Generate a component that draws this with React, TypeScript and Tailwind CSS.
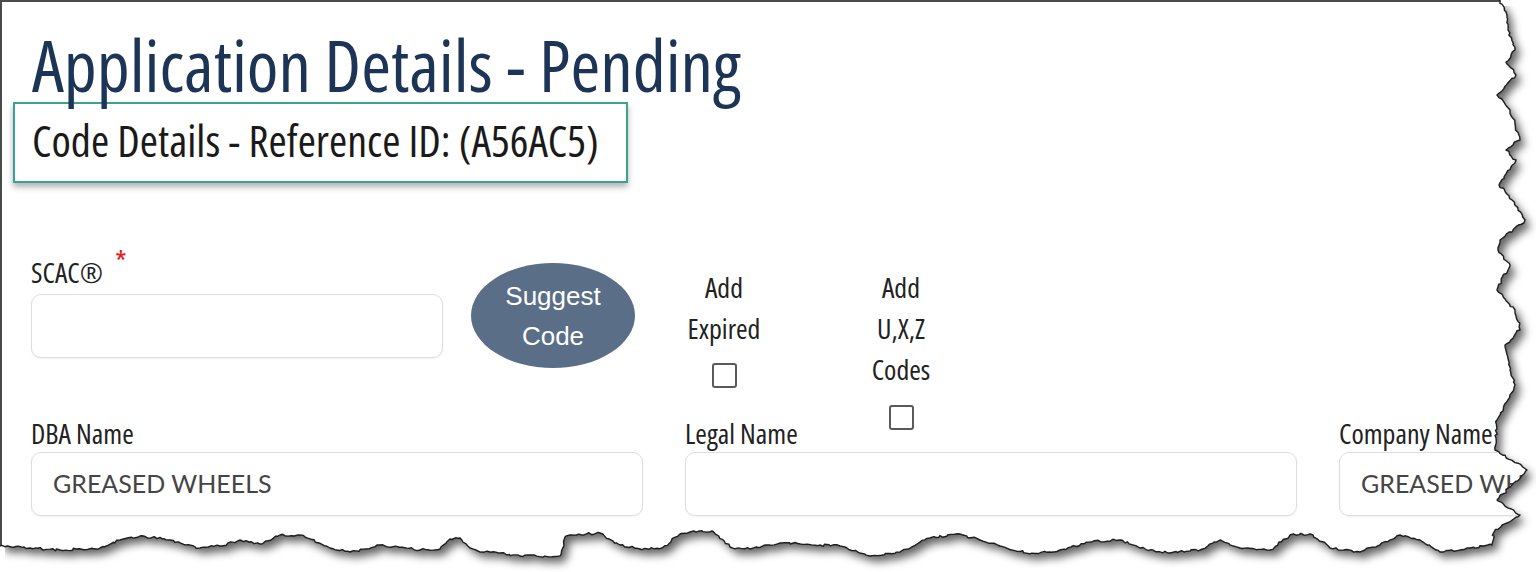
import React from "react";

const narrow = "font-['Open_Sans',sans-serif] font-stretch-condensed";

// rough outline of the torn paper edge, right side then bottom (right to left)
const rightEdge: [number, number][] = [
  [1500, 0], [1506, 12], [1508, 30], [1515, 50], [1506, 62], [1516, 75], [1497, 95],
  [1510, 110], [1520, 140], [1506, 150], [1516, 160], [1499, 185], [1512, 200],
  [1525, 220], [1500, 240], [1498, 250], [1510, 265], [1497, 290], [1515, 310],
  [1520, 330], [1505, 345], [1510, 370], [1515, 385], [1497, 420], [1495, 450],
  [1527, 470], [1497, 500], [1520, 515], [1494, 532], [1492, 545],
];

const bottomEdge: [number, number][] = [
  [1470, 548], [1440, 552], [1420, 540], [1400, 535], [1380, 545], [1360, 552],
  [1330, 548], [1310, 534], [1290, 535], [1270, 550], [1240, 548], [1220, 540],
  [1200, 550], [1170, 553], [1140, 548], [1120, 540], [1090, 542], [1060, 550],
  [1030, 554], [1000, 546], [980, 540], [960, 534], [930, 538], [900, 552],
  [870, 556], [840, 546], [820, 545], [780, 543], [750, 549], [730, 547],
  [712, 531], [690, 532], [680, 534], [662, 548], [640, 549], [620, 545],
  [600, 533], [570, 535], [565, 537], [560, 556], [520, 556], [500, 553],
  [482, 552], [470, 548], [460, 538], [450, 539], [440, 549], [420, 550],
  [380, 545], [350, 552], [330, 548], [300, 535], [280, 535], [260, 544],
  [240, 540], [220, 546], [200, 548], [170, 540], [140, 536], [120, 540],
  [100, 548], [60, 550], [30, 548], [0, 546],
];

function roughen(pts: [number, number][]) {
  let s = 7;
  const rnd = () => {
    s = (s * 16807) % 2147483647;
    return s / 2147483647 - 0.5;
  };
  const out: string[] = [];
  for (let i = 0; i < pts.length - 1; i++) {
    const [x0, y0] = pts[i];
    const [x1, y1] = pts[i + 1];
    const len = Math.hypot(x1 - x0, y1 - y0);
    const n = Math.max(1, Math.ceil(len / 3));
    for (let k = 0; k < n; k++) {
      const t = k / n;
      const jx = k === 0 ? 0 : rnd() * 2.4;
      const jy = k === 0 ? 0 : rnd() * 2.4;
      out.push(`${(x0 + (x1 - x0) * t + jx).toFixed(1)} ${(y0 + (y1 - y0) * t + jy).toFixed(1)}`);
    }
  }
  const last = pts[pts.length - 1];
  out.push(`${last[0]} ${last[1]}`);
  return out;
}

const edgePts = roughen([...rightEdge, ...bottomEdge]);
const edgePath = "M" + edgePts.join(" L");
const paperPath = "M0 0 L" + edgePts.join(" L") + " Z";
const outsidePath = "M0 0 H1536 V572 H0 Z " + paperPath;

function TornEdge() {
  return (
    <svg className="pointer-events-none absolute inset-0" width="1536" height="572" viewBox="0 0 1536 572">
      <defs>
        <clipPath id="outside">
          <path d={outsidePath} clipRule="evenodd" />
        </clipPath>
        <filter id="soft" filterUnits="userSpaceOnUse" x="0" y="0" width="1536" height="572">
          <feGaussianBlur stdDeviation="4" />
        </filter>
      </defs>
      <path d={outsidePath} fill="#fff" fillRule="evenodd" />
      <g clipPath="url(#outside)">
        <path d={paperPath} fill="#000" fillOpacity="0.6" filter="url(#soft)" transform="translate(5 6)" />
      </g>
      <path d={edgePath} fill="none" stroke="#1e1e1e" strokeWidth="1.4" strokeLinejoin="round" />
    </svg>
  );
}

function Checkbox() {
  return <span className="block h-[25px] w-[25px] rounded-[3px] border-2 border-[#5a5a5a] bg-white" />;
}

function TextField({ value }: { value?: string }) {
  return (
    <div className="flex h-[64px] w-full items-center rounded-[10px] border border-[#dedede] bg-white pl-[21px] font-['Lato',sans-serif] text-[25px] text-[#454545] shadow-[0_1px_2px_rgba(0,0,0,0.06)]">
      {value}
    </div>
  );
}

export default function App() {
  const fields = [
    { label: "DBA Name", value: "GREASED WHEELS" },
    { label: "Legal Name", value: "" },
    { label: "Company Name", value: "GREASED WHEELS" },
  ];

  return (
    <div className="relative h-[572px] w-[1536px] overflow-hidden bg-white">
      <div className="h-full border-l-2 border-t-2 border-[#4a4a4a] pl-[11px]">
        <h1 className={`${narrow} mb-[2px] ml-[19px] mt-[26px] text-[72px] font-medium leading-[72px] text-[#1c3456]`}>
          Application Details - Pending
        </h1>

        <div className="w-[615px] border-2 border-[#3ba38c] bg-white pb-[19px] pl-[17px] pt-[14px] shadow-[0_4px_6px_rgba(0,0,0,0.3)]">
          <h2 className={`${narrow} text-[44px] font-medium leading-[44px] text-[#1a1a1a]`}>
            Code Details - Reference ID: (A56AC5)
          </h2>
        </div>

        <div className={`${narrow} ml-[18px] mt-[74px] font-medium text-[#222]`}>
          <div className="flex h-[161px] items-start">
            <div className="w-[412px]">
              <label className="block h-[30px] text-[28px] leading-[30px]">
                SCAC®
                <span className="relative -top-[10px] ml-[12px] text-[30px] text-[#e0201c]">*</span>
              </label>
              <div className="mt-[7px]">
                <TextField />
              </div>
            </div>

            <button className="ml-[28px] mt-[6px] h-[105px] w-[164px] rounded-[50%] bg-[#5a6f87] font-['Liberation_Sans',sans-serif] text-[26px] font-normal leading-[40px] text-white [font-stretch:normal]">
              Suggest
              <br />
              Code
            </button>

            <div className="ml-[29px] mt-[10px] flex w-[120px] flex-col items-center text-[28px] leading-[41px]">
              <span>Add</span>
              <span>Expired</span>
              <span className="mt-[14px]">
                <Checkbox />
              </span>
            </div>

            <div className="ml-[57px] mt-[10px] flex w-[120px] flex-col items-center text-[28px] leading-[41px]">
              <span>Add</span>
              <span>U,X,Z</span>
              <span>Codes</span>
              <span className="mt-[15px]">
                <Checkbox />
              </span>
            </div>
          </div>

          <div className="grid grid-cols-[612px_612px_612px] gap-x-[42px]">
            {fields.map((f) => (
              <div key={f.label}>
                <label className="block h-[30px] text-[28px] leading-[30px]">{f.label}</label>
                <div className="mt-[4px] font-normal [font-stretch:normal]">
                  <TextField value={f.value} />
                </div>
              </div>
            ))}
          </div>
        </div>
      </div>
      <TornEdge />
    </div>
  );
}
